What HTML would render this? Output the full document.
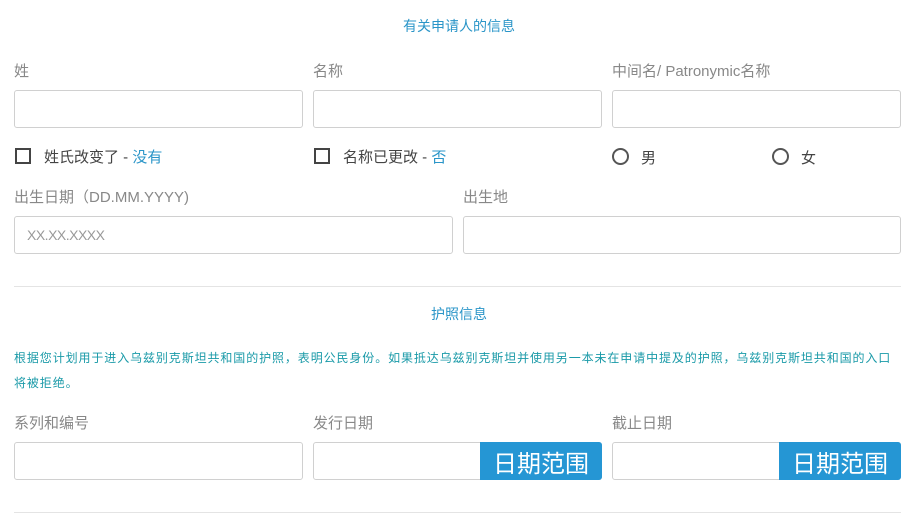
<!DOCTYPE html>
<html><head><meta charset="utf-8"><style>
*{box-sizing:border-box;margin:0;padding:0}
body{width:918px;height:532px;background:#fff;font-family:"Liberation Sans","Noto Sans CJK SC",sans-serif;position:relative;overflow:hidden;color:#666}
.a{position:absolute;white-space:nowrap}
.t{color:#2a95c8;font-size:14px;width:918px;text-align:center;left:0}
.l{color:#888;font-size:15px}
.i{position:absolute;border:1px solid #d0d0d0;border-radius:3px;background:#fff}
.cb{position:absolute;width:16px;height:16px;border:2px solid #444}
.rd{position:absolute;width:17px;height:17px;border:2px solid #555;border-radius:50%}
.c{font-size:15px;color:#444}
.b{color:#2a95c8}
.hr{position:absolute;left:14px;width:887px;height:1px;background:#e4e4e4}
.p{color:#1a9aa8;font-size:12px;left:14px;letter-spacing:0.9px}
.btn{position:absolute;background:#2596d4;color:#fff;font-size:24px;line-height:38px;padding-top:4px;text-align:center;border-radius:0 3px 3px 0;overflow:hidden}
</style></head><body>
<div class="a t" style="top:16px">有关申请人的信息</div>
<div class="a l" style="left:14px;top:60px">姓</div>
<div class="a l" style="left:313px;top:60px">名称</div>
<div class="a l" style="left:612px;top:60px">中间名/ Patronymic名称</div>
<div class="i" style="left:14px;top:90px;width:289px;height:38px"></div>
<div class="i" style="left:313px;top:90px;width:289px;height:38px"></div>
<div class="i" style="left:612px;top:90px;width:289px;height:38px"></div>
<div class="cb" style="left:15px;top:148px"></div>
<div class="a c" style="left:44px;top:146px">姓氏改变了 - <span class="b">没有</span></div>
<div class="cb" style="left:314px;top:148px"></div>
<div class="a c" style="left:343px;top:146px">名称已更改 - <span class="b">否</span></div>
<div class="rd" style="left:612px;top:148px"></div>
<div class="a c" style="left:641px;top:147px">男</div>
<div class="rd" style="left:772px;top:148px"></div>
<div class="a c" style="left:801px;top:147px">女</div>
<div class="a l" style="left:14px;top:186px">出生日期（DD.MM.YYYY)</div>
<div class="a l" style="left:463px;top:186px">出生地</div>
<div class="i" style="left:14px;top:216px;width:439px;height:38px"></div>
<div class="a" style="left:27px;top:227px;font-size:14px;color:#999;letter-spacing:-0.5px">XX.XX.XXXX</div>
<div class="i" style="left:463px;top:216px;width:438px;height:38px"></div>
<div class="hr" style="top:286px"></div>
<div class="a t" style="top:304px">护照信息</div>
<div class="a p" style="top:349px">根据您计划用于进入乌兹别克斯坦共和国的护照，表明公民身份。如果抵达乌兹别克斯坦并使用另一本未在申请中提及的护照，乌兹别克斯坦共和国的入口</div>
<div class="a p" style="top:374px">将被拒绝。</div>
<div class="a l" style="left:14px;top:412px">系列和编号</div>
<div class="a l" style="left:313px;top:412px">发行日期</div>
<div class="a l" style="left:612px;top:412px">截止日期</div>
<div class="i" style="left:14px;top:442px;width:289px;height:38px"></div>
<div class="i" style="left:313px;top:442px;width:289px;height:38px"></div>
<div class="btn" style="left:480px;top:442px;width:122px;height:38px">日期范围</div>
<div class="i" style="left:612px;top:442px;width:289px;height:38px"></div>
<div class="btn" style="left:779px;top:442px;width:122px;height:38px">日期范围</div>
<div class="hr" style="top:512px"></div>
</body></html>
